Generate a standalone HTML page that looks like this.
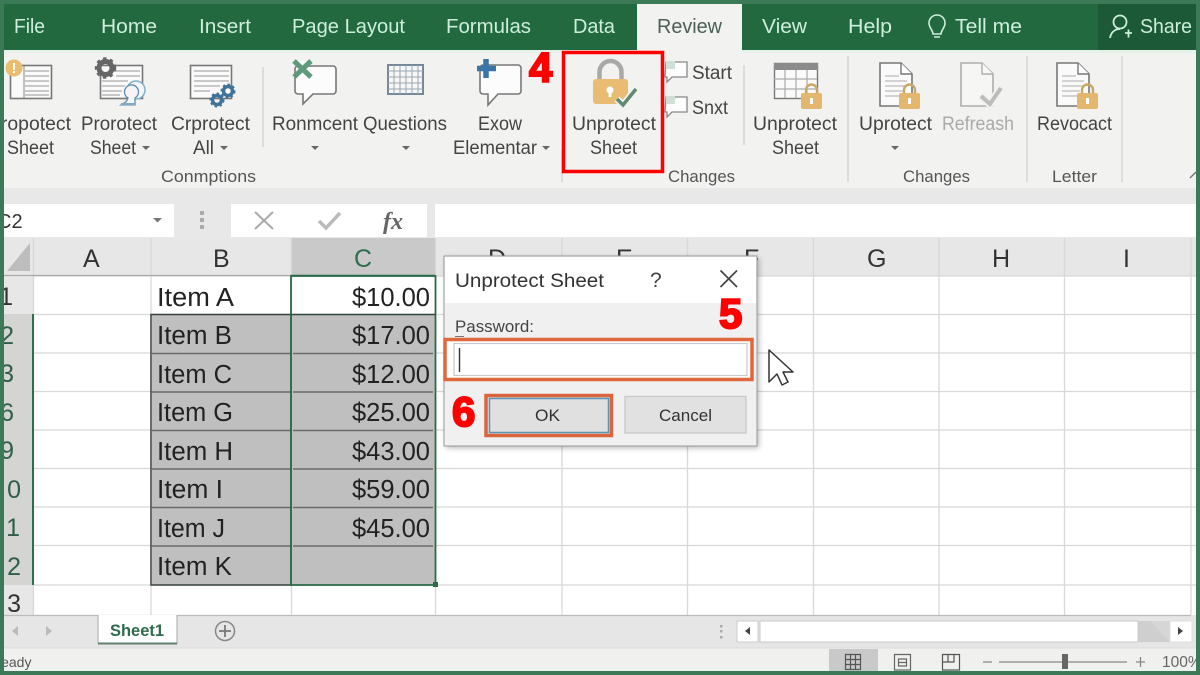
<!DOCTYPE html>
<html><head><meta charset="utf-8"><title>Unprotect Sheet</title>
<style>
html,body{margin:0;padding:0;width:1200px;height:675px;overflow:hidden;background:#3c7a57}
svg{display:block;position:absolute;left:0;top:0;filter:blur(.35px)}
text{font-family:"Liberation Sans",sans-serif}
.tab{font-size:20.5px;fill:#cdeedb}
.rb{font-size:19px;fill:#444}
.gr{font-size:17px;fill:#555}
.cell{font-size:25.5px;fill:#222}
.hd{font-size:25px;fill:#333}
.rn{font-size:25px;fill:#2f5f48;text-anchor:end}
.dg{font-size:17px;fill:#333}
.num{font-size:42px;font-weight:bold;fill:#f00;stroke:#f00;stroke-width:2px}
</style></head><body>
<svg width="1200" height="675" viewBox="0 0 1200 675" xmlns="http://www.w3.org/2000/svg">
<defs>
<clipPath id="c"><rect x="4" y="4" width="1192" height="667"/></clipPath>
<filter id="sh" x="-10%" y="-10%" width="120%" height="120%"><feGaussianBlur stdDeviation="3"/></filter>
<g id="lock"><path d="M5 11V7a5.500 5.500 0 0 1 11 0v4" fill="none" stroke="#c9a768" stroke-width="2.400"/><rect x="0" y="10" width="21" height="16" rx="2" fill="#e3b76e"/><rect x="9" y="15" width="3" height="6" fill="#fff"/></g>
<g id="doc"><path d="M1 1H22L33 12V44H1Z" fill="#fafafa" stroke="#777" stroke-width="1.600"/><path d="M22 1V12H33" fill="#fff" stroke="#777" stroke-width="1.400"/></g>
<g id="dl" stroke="#bbb" stroke-width="1.300"><path d="M6 14H20M6 19H28M6 24H28M6 29H24M6 34H22"/></g>
</defs>
<g clip-path="url(#c)">
<!-- tab strip -->
<rect x="0" y="4" width="1200" height="46" fill="#22693f"/>
<rect x="1098" y="4" width="102" height="46" fill="#1c5a37"/>
<rect x="0" y="50" width="1200" height="4" fill="#e6f1ea"/>
<rect x="0" y="53" width="1200" height="135" fill="#f2f2f1"/>
<rect x="637" y="4" width="105" height="50" fill="#f2f2f1"/>
<text class="tab" x="14" y="33" textLength="31" lengthAdjust="spacingAndGlyphs">File</text>
<text class="tab" x="101" y="33" textLength="56" lengthAdjust="spacingAndGlyphs">Home</text>
<text class="tab" x="199" y="33" textLength="52" lengthAdjust="spacingAndGlyphs">Insert</text>
<text class="tab" x="292" y="33" textLength="113" lengthAdjust="spacingAndGlyphs">Page Layout</text>
<text class="tab" x="446" y="33" textLength="85" lengthAdjust="spacingAndGlyphs">Formulas</text>
<text class="tab" x="573" y="33" textLength="42" lengthAdjust="spacingAndGlyphs">Data</text>
<text class="tab" x="657" y="33" textLength="65" lengthAdjust="spacingAndGlyphs" style="fill:#4a6055">Review</text>
<text class="tab" x="762" y="33" textLength="45" lengthAdjust="spacingAndGlyphs">View</text>
<text class="tab" x="848" y="33" textLength="44" lengthAdjust="spacingAndGlyphs">Help</text>
<text class="tab" x="955" y="33" textLength="67" lengthAdjust="spacingAndGlyphs">Tell me</text>
<text class="tab" x="1140" y="33" textLength="52" lengthAdjust="spacingAndGlyphs">Share</text>
<!-- bulb, share -->
<path d="M933 34c0-4-4-6-4-11a8 8 0 0 1 16 0c0 5-4 7-4 11zM934 37h6" fill="none" stroke="#cdeedb" stroke-width="1.600"/>
<circle cx="1120" cy="22" r="6.500" fill="none" stroke="#cdeedb" stroke-width="1.800"/>
<path d="M1110 38c1-6 5-9 10-9M1125 33h7M1128.500 29.500v8" fill="none" stroke="#cdeedb" stroke-width="1.800"/>

<!-- ribbon separators -->
<g stroke="#d6d6d6" stroke-width="1.500">
<path d="M263 67V147M562 150V182M744 65V145M848 56V182M1027 56V182M1122 56V182"/>
</g>

<!-- icon 1 -->
<rect x="10.500" y="65.500" width="41" height="33" fill="#fafafa" stroke="#777" stroke-width="1.600"/>
<path d="M25 71H49M25 76H49M25 81H49M25 86H49M25 91H49M25 95H49" stroke="#c8c8c8" stroke-width="2"/>
<path d="M24 66V98" stroke="#999" stroke-width="1.200"/>
<circle cx="14" cy="68" r="8.500" fill="#e9bd6e"/><rect x="13" y="63" width="2" height="7" fill="#fff"/><rect x="13" y="71" width="2" height="2" fill="#fff"/>
<!-- icon 2 -->
<rect x="100.500" y="65.500" width="42" height="33" fill="#fafafa" stroke="#777" stroke-width="1.600"/>
<path d="M116 71H140M116 76H140M102 81H128M102 86H125M102 91H122M102 95H120" stroke="#c8c8c8" stroke-width="2"/>
<circle cx="105.500" cy="68" r="6.500" fill="none" stroke="#666" stroke-width="5"/>
<circle cx="105.500" cy="68" r="9.500" fill="none" stroke="#666" stroke-width="2.500" stroke-dasharray="3.500 3.500"/>
<circle cx="136" cy="90" r="9" fill="#f5f5f5" stroke="#7fb0cc" stroke-width="1.500"/>
<path d="M121 105c3-2 6-3 7-7a7 7 0 1 1 7 0v7z" fill="#f5f5f5" stroke="#5d8fb1" stroke-width="1.300"/>
<rect x="121" y="103" width="14" height="2.500" fill="#7fa9c4"/>
<!-- icon 3 -->
<rect x="190.500" y="65.500" width="41" height="33" fill="#fafafa" stroke="#777" stroke-width="1.600"/>
<path d="M194 71H229M194 76H229M194 81H229M194 86H220M194 91H210" stroke="#c8c8c8" stroke-width="2"/>
<circle cx="217" cy="100" r="4.500" fill="none" stroke="#3f7399" stroke-width="3.500"/>
<circle cx="217" cy="100" r="6.500" fill="none" stroke="#3f7399" stroke-width="2" stroke-dasharray="2.500 2.500"/>
<circle cx="228" cy="91" r="4.500" fill="none" stroke="#3f7399" stroke-width="3.500"/>
<circle cx="228" cy="91" r="6.500" fill="none" stroke="#3f7399" stroke-width="2" stroke-dasharray="2.500 2.500"/>
<!-- bubble X -->
<path d="M298 66H333a3 3 0 0 1 3 3V91a3 3 0 0 1-3 3H313L303 104V94H298a3 3 0 0 1-3-3V69a3 3 0 0 1 3-3Z" fill="#fcfcfc" stroke="#777" stroke-width="1.600"/>
<path d="M294 61H311L305 69L311 77H294L300 69Z" fill="#fcfcfc"/>
<path d="M294 61L311 77M311 61L294 77" stroke="#5f9a7c" stroke-width="5"/>
<!-- questions table -->
<rect x="388" y="65" width="35" height="29" fill="#f7f7f7" stroke="#74889a" stroke-width="2"/>
<path d="M388 71H423M388 77H423M388 83H423M388 89H423M394 65V94M400 65V94M406 65V94M412 65V94M418 65V94" stroke="#9aa7b2" stroke-width="1"/>
<!-- bubble plus -->
<path d="M483 65H518a3 3 0 0 1 3 3V91a3 3 0 0 1-3 3H498L488 105V94H483a3 3 0 0 1-3-3V68a3 3 0 0 1 3-3Z" fill="#fcfcfc" stroke="#777" stroke-width="1.600"/>
<path d="M486 59V78M477 68.500H496" stroke="#3a75a8" stroke-width="5.500"/>
<!-- lock -->
<path d="M599.500 82V72a11 11 0 0 1 22 0v10" fill="none" stroke="#a9a9a6" stroke-width="4.500"/>
<rect x="593" y="79" width="35" height="25" rx="3" fill="#e8bc72"/>
<circle cx="610" cy="90" r="3.500" fill="#fff"/><rect x="608.500" y="90" width="3" height="7" fill="#fff"/>
<path d="M617 99L623 105L636 89" fill="none" stroke="#f2f2f1" stroke-width="7"/>
<path d="M617 99L623 105L636 89" fill="none" stroke="#5f8a73" stroke-width="3.500"/>
<!-- small bubbles -->
<path d="M666 62H687V77H672L667 82V77H665Z" fill="#fdfdfd" stroke="#888" stroke-width="1.300"/>
<rect x="666" y="61" width="9" height="8" fill="#cfe0d6"/>
<path d="M666 97H687V112H672L667 117V112H665Z" fill="#fdfdfd" stroke="#888" stroke-width="1.300"/>
<rect x="666" y="96" width="9" height="8" fill="#cfe0d6"/>
<!-- table lock -->
<rect x="774.500" y="63.500" width="43" height="35" fill="#fafafa" stroke="#777" stroke-width="1.400"/>
<rect x="774" y="63" width="44" height="7" fill="#8b8b8b"/>
<path d="M774 79H817M774 89H817M785 70V98M796 70V98M807 70V98" stroke="#aaa" stroke-width="1.200"/>
<use href="#lock" x="801" y="83"/>
<!-- doc locks -->
<use href="#doc" x="879" y="62"/><use href="#dl" x="879" y="62"/><use href="#lock" x="899" y="83"/>
<g opacity=".55"><use href="#doc" x="960" y="62"/></g>
<path d="M981 96L990 104L1001 88" fill="none" stroke="#f2f2f1" stroke-width="8"/>
<path d="M981 96L990 104L1001 88" fill="none" stroke="#bcbcbc" stroke-width="4"/>
<use href="#doc" x="1056" y="62"/><use href="#dl" x="1056" y="62"/><use href="#lock" x="1077" y="83"/>

<!-- ribbon labels -->
<text class="rb" x="-12" y="130" textLength="83" lengthAdjust="spacingAndGlyphs">Propotect</text>
<text class="rb" x="7" y="154" textLength="47" lengthAdjust="spacingAndGlyphs">Sheet</text>
<text class="rb" x="81" y="130" textLength="76" lengthAdjust="spacingAndGlyphs">Prorotect</text>
<text class="rb" x="90" y="154" textLength="46" lengthAdjust="spacingAndGlyphs">Sheet</text>
<text class="rb" x="171" y="130" textLength="79" lengthAdjust="spacingAndGlyphs">Crprotect</text>
<text class="rb" x="193" y="154" textLength="21" lengthAdjust="spacingAndGlyphs">All</text>
<text class="rb" x="272" y="130" textLength="86" lengthAdjust="spacingAndGlyphs">Ronmcent</text>
<text class="rb" x="363" y="130" textLength="84" lengthAdjust="spacingAndGlyphs">Questions</text>
<text class="rb" x="478" y="130" textLength="44" lengthAdjust="spacingAndGlyphs">Exow</text>
<text class="rb" x="453" y="154" textLength="84" lengthAdjust="spacingAndGlyphs">Elementar</text>
<text class="rb" x="572" y="130" textLength="84" lengthAdjust="spacingAndGlyphs">Unprotect</text>
<text class="rb" x="590" y="154" textLength="47" lengthAdjust="spacingAndGlyphs">Sheet</text>
<text class="rb" x="692" y="79" textLength="40" lengthAdjust="spacingAndGlyphs">Start</text>
<text class="rb" x="692" y="114" textLength="36" lengthAdjust="spacingAndGlyphs">Snxt</text>
<text class="rb" x="753" y="130" textLength="84" lengthAdjust="spacingAndGlyphs">Unprotect</text>
<text class="rb" x="772" y="154" textLength="47" lengthAdjust="spacingAndGlyphs">Sheet</text>
<text class="rb" x="859" y="130" textLength="73" lengthAdjust="spacingAndGlyphs">Uprotect</text>
<text class="rb" x="942" y="130" textLength="72" lengthAdjust="spacingAndGlyphs" style="fill:#aaa">Refreash</text>
<text class="rb" x="1037" y="130" textLength="75" lengthAdjust="spacingAndGlyphs">Revocact</text>
<g fill="#666"><path d="M142 146h8l-4 4zM220 146h8l-4 4zM311 146h8l-4 4zM402 146h8l-4 4zM542 146h8l-4 4zM891 146h8l-4 4z"/></g>
<text class="gr" x="161" y="182" textLength="95" lengthAdjust="spacingAndGlyphs">Conmptions</text>
<text class="gr" x="668" y="182" textLength="67" lengthAdjust="spacingAndGlyphs">Changes</text>
<text class="gr" x="903" y="182" textLength="67" lengthAdjust="spacingAndGlyphs">Changes</text>
<text class="gr" x="1052" y="182" textLength="45" lengthAdjust="spacingAndGlyphs">Letter</text>
<path d="M1190 178l6-6" stroke="#777" stroke-width="1.500"/>
<rect x="563.500" y="52.500" width="99" height="119" fill="none" stroke="#f00" stroke-width="3.500"/>
<text class="num" x="529" y="82">4</text>

<!-- formula bar -->
<rect x="0" y="188" width="1200" height="50" fill="#e8e8e8"/>
<rect x="0" y="204" width="174" height="33" fill="#fff"/>
<rect x="231" y="204" width="196" height="33" fill="#fff"/>
<rect x="435" y="204" width="765" height="33" fill="#fff"/>
<text x="-3" y="228" style="font-size:20px;fill:#333">C2</text>
<path d="M153 218h9l-4.500 4.500z" fill="#777"/>
<g fill="#aaa"><rect x="200" y="211" width="4" height="4"/><rect x="200" y="218" width="4" height="4"/><rect x="200" y="225" width="4" height="4"/></g>
<path d="M255 212L273 229M273 212L255 229" stroke="#aaa" stroke-width="2"/>
<path d="M319 221L326 228L340 213" fill="none" stroke="#bbb" stroke-width="3.500"/>
<text x="383" y="229" style="font-family:'Liberation Serif',serif;font-size:24px;font-style:italic;font-weight:bold;fill:#666">fx</text>

<!-- grid -->
<rect x="0" y="238" width="1200" height="377" fill="#fff"/>
<rect x="0" y="238" width="1200" height="38" fill="#e7e7e7"/>
<rect x="0" y="276" width="33" height="339" fill="#e7e7e7"/>
<path d="M30 243V271H7Z" fill="#bdbdbd"/>
<rect x="291" y="238" width="144" height="38" fill="#c9c9c9"/>
<rect x="4" y="314" width="29" height="271" fill="#d4d4d2"/>
<g stroke="#d8d8d8" stroke-width="1.300">
<path d="M33 276H1196M33 314.500H1196M33 353H1196M33 391.500H1196M33 430H1196M33 468.500H1196M33 507H1196M33 545.500H1196M33 585H1196"/>
<path d="M151 238V615M291.500 238V615M435.500 238V615M562 238V615M687.500 238V615M813.500 238V615M939 238V615M1064.500 238V615M1191 238V615M33.500 238V615"/>
</g>
<path d="M4 275.500H435" stroke="#aaa" stroke-width="1.300"/>
<path d="M291 275.500H435" stroke="#2f6e4d" stroke-width="1.500"/>
<!-- selection -->
<rect x="152" y="315" width="139" height="270" fill="#bfbfbf"/>
<rect x="292" y="315" width="143" height="270" fill="#bfbfbf"/>
<g stroke="#6a6a6a" stroke-width="1.600">
<path d="M152 353.500H291M152 392H291M152 430.500H291M152 469H291M152 507.500H291M152 546H291M293 353.500H433M293 392H433M293 430.500H433M293 469H433M293 507.500H433M293 546H433"/>
</g>
<path d="M151 314.500H291V585H151Z" fill="none" stroke="#39413c" stroke-width="1.500"/>
<path d="M291 276H435.500V585H291Z" fill="none" stroke="#2a6a48" stroke-width="1.800"/>
<path d="M291 314.500H435" stroke="#2f4a3c" stroke-width="1.500"/>
<rect x="433" y="582" width="5" height="5" fill="#2a6a48"/>
<path d="M33 314V585" stroke="#2f6e4d" stroke-width="2"/>
<!-- headers -->
<text class="hd" x="83" y="267">A</text>
<text class="hd" x="213" y="267">B</text>
<text class="hd" x="354" y="267" style="fill:#2f6e4d">C</text>
<text class="hd" x="488" y="267">D</text>
<text class="hd" x="616" y="267">E</text>
<text class="hd" x="744" y="267">F</text>
<text class="hd" x="867" y="267">G</text>
<text class="hd" x="992" y="267">H</text>
<text class="hd" x="1123" y="267">I</text>
<!-- row nums -->
<text class="rn" x="13" y="305" style="fill:#333">1</text>
<text class="rn" x="14" y="344">2</text>
<text class="rn" x="14" y="382">3</text>
<text class="rn" x="14" y="421">6</text>
<text class="rn" x="14" y="459">9</text>
<text class="rn" x="21" y="498">0</text>
<text class="rn" x="20" y="536">1</text>
<text class="rn" x="21" y="575">2</text>
<text class="rn" x="21" y="612" style="fill:#333">3</text>
<!-- cells -->
<text class="cell" x="157" y="306" textLength="77" lengthAdjust="spacingAndGlyphs">Item A</text>
<text class="cell" x="157" y="344" textLength="75" lengthAdjust="spacingAndGlyphs">Item B</text>
<text class="cell" x="157" y="383" textLength="75" lengthAdjust="spacingAndGlyphs">Item C</text>
<text class="cell" x="157" y="421" textLength="76" lengthAdjust="spacingAndGlyphs">Item G</text>
<text class="cell" x="157" y="460" textLength="76" lengthAdjust="spacingAndGlyphs">Item H</text>
<text class="cell" x="157" y="498" textLength="66" lengthAdjust="spacingAndGlyphs">Item I</text>
<text class="cell" x="157" y="537" textLength="68" lengthAdjust="spacingAndGlyphs">Item J</text>
<text class="cell" x="157" y="575" textLength="75" lengthAdjust="spacingAndGlyphs">Item K</text>
<g style="text-anchor:end">
<text class="cell" x="430" y="306">$10.00</text>
<text class="cell" x="430" y="344">$17.00</text>
<text class="cell" x="430" y="383">$12.00</text>
<text class="cell" x="430" y="421">$25.00</text>
<text class="cell" x="430" y="460">$43.00</text>
<text class="cell" x="430" y="498">$59.00</text>
<text class="cell" x="430" y="537">$45.00</text>
</g>

<!-- tab bar -->
<rect x="0" y="615" width="1200" height="33" fill="#e6e6e6"/>
<path d="M0 615.500H1191" stroke="#bbb" stroke-width="1.300"/>
<rect x="98" y="615" width="79" height="29" fill="#fff"/>
<path d="M98 615V644M177 615V644" stroke="#aaa"/>
<rect x="98" y="642.500" width="79" height="2" fill="#627e6e"/>
<text x="110" y="636" textLength="54" lengthAdjust="spacingAndGlyphs" style="font-size:17px;font-weight:bold;fill:#2f6a4d">Sheet1</text>
<path d="M18 626v10l-6-5zM46 626v10l6-5z" fill="#bbb"/>
<circle cx="225" cy="631" r="9.500" fill="none" stroke="#888" stroke-width="1.500"/>
<path d="M219 631H231M225 625V637" stroke="#777" stroke-width="1.800"/>
<g fill="#aaa"><rect x="720" y="625" width="2.500" height="2.500"/><rect x="720" y="630" width="2.500" height="2.500"/><rect x="720" y="636" width="2.500" height="2.500"/></g>
<rect x="1138" y="621" width="54" height="21" fill="#d6d6d6"/>
<path d="M1150 621L1170 642H1138V621Z" fill="#cfcfcf"/>
<rect x="737" y="621" width="21" height="21" fill="#fff" stroke="#ccc"/>
<rect x="760" y="621" width="378" height="21" fill="#fff" stroke="#c8c8c8"/>
<rect x="1170" y="621" width="22" height="21" fill="#fff" stroke="#ddd"/>
<path d="M750 627v8l-5-4zM1178 627v8l5-4z" fill="#444"/>
<!-- status -->
<rect x="0" y="648" width="1200" height="24" fill="#f0f0ef"/>
<path d="M0 648H1200" stroke="#dcdcdc"/>
<text x="-9" y="667" style="font-size:14px;fill:#555">Ready</text>
<rect x="829" y="649" width="49" height="22" fill="#c9c9c9"/>
<path d="M845.500 654.500H860.500V669.500H845.500ZM845 659.500H861M845 664.500H861M850.500 654V670M855.500 654V670" fill="none" stroke="#555" stroke-width="1.200"/>
<path d="M894.500 654.500H910.500V670H894.500ZM898.500 659H906.500V666H898.500ZM898.500 662.500H906.500" fill="none" stroke="#666" stroke-width="1.200"/>
<path d="M942.500 654.500H959.500V670H942.500ZM948 654.500V662H954V654.500M942.500 662H948" fill="none" stroke="#555" stroke-width="1.200"/>
<path d="M983 662H992M999 662H1127M1136 662H1145M1140.500 657V667" stroke="#888" stroke-width="1.300"/>
<rect x="1062" y="654" width="6" height="15" fill="#666"/>
<text x="1162" y="667" style="font-size:15.500px;fill:#666">100%</text>

<!-- dialog -->
<rect x="446" y="258" width="313" height="190" fill="#000" opacity=".28" filter="url(#sh)"/>
<rect x="444" y="256" width="313" height="190" fill="#f0f0f0" stroke="#9a9a9a" stroke-width="1"/>
<rect x="445" y="257" width="311" height="46" fill="#fff"/>
<text x="455" y="287" textLength="149" lengthAdjust="spacingAndGlyphs" style="font-size:19px;fill:#333">Unprotect Sheet</text>
<text x="650" y="287" style="font-size:21px;fill:#444">?</text>
<path d="M720.500 270.500L737 287M737 270.500L720.500 287" stroke="#444" stroke-width="1.700"/>
<text class="num" x="719" y="328">5</text>
<text x="455" y="332" textLength="79" lengthAdjust="spacingAndGlyphs" style="font-size:16.500px;fill:#444">Password:</text>
<path d="M455 336.500H464" stroke="#777"/>
<rect x="445" y="339.500" width="307" height="40" fill="#fff" stroke="#e0663c" stroke-width="3.500"/>
<rect x="454" y="343.500" width="293" height="32" fill="#fff" stroke="#c9c9c9" stroke-width="1.200"/>
<path d="M459.500 348V372" stroke="#333" stroke-width="1.400"/>
<text class="num" x="452" y="426">6</text>
<rect x="486" y="395.500" width="125.500" height="40" fill="#e2e2e2" stroke="#d9643e" stroke-width="3.500"/>
<rect x="489.500" y="398.500" width="119" height="34" fill="#e0e0e0" stroke="#5b93b8" stroke-width="1.500"/>
<text class="dg" x="535" y="421" textLength="25" lengthAdjust="spacingAndGlyphs">OK</text>
<rect x="625" y="396.500" width="121" height="36.500" fill="#e1e1e1" stroke="#c8c8c8" stroke-width="1.300"/>
<text class="dg" x="659" y="421" textLength="53" lengthAdjust="spacingAndGlyphs">Cancel</text>
<!-- cursor -->
<path d="M769 350V382L777 374L782 385L788 382L783 372H793Z" fill="#fff" stroke="#333" stroke-width="1.500" stroke-linejoin="round"/>
</g>
</svg>
</body></html>
